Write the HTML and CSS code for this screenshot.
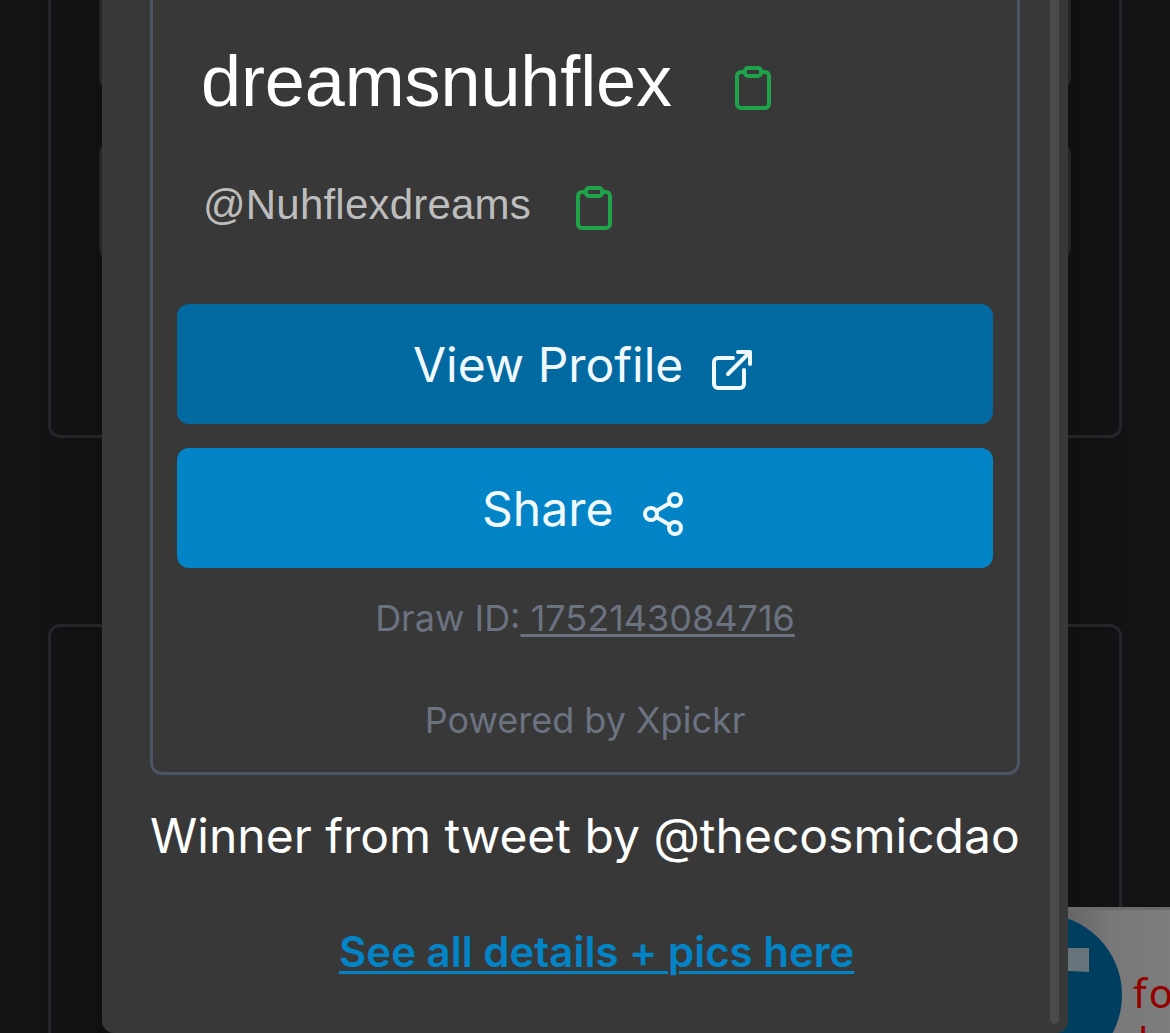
FILE: index.html
```html
<!DOCTYPE html>
<html lang="en">
<head>
<meta charset="utf-8">
<title>Xpickr winner</title>
<link rel="stylesheet" href="styles.css">
</head>
<body>
<div class="page">
  <section class="panel panel-top">
    <div class="field field-first"></div>
    <div class="field"></div>
  </section>
  <section class="panel panel-bottom"></section>
</div>
<aside class="promo">
  <span class="logo"><span class="logo-mark"></span></span>
  <p class="promo-text">fo</p>
  <p class="promo-text promo-next">l</p>
</aside>
<main class="modal">
  <section class="card">
    <div class="row name-row">
      <h1 class="name">dreamsnuhflex</h1>
      <svg class="clip" viewBox="0 0 36 44"><rect x="2" y="6" width="32" height="36" rx="4"/><rect class="clip-tab" x="10" y="2" width="16" height="8" rx="3"/></svg>
    </div>
    <div class="row handle-row">
      <p class="handle">@Nuhflexdreams</p>
      <svg class="clip" viewBox="0 0 36 44"><rect x="2" y="6" width="32" height="36" rx="4"/><rect class="clip-tab" x="10" y="2" width="16" height="8" rx="3"/></svg>
    </div>
    <a class="button view"><span class="view-label">View Profile</span>
      <svg class="icon" viewBox="0 0 24 24"><path d="M12.5 6H5a2 2 0 0 0-2 2v11a2 2 0 0 0 2 2h11a2 2 0 0 0 2-2v-7M15 3h6v6M10 14 21 3"/></svg>
    </a>
    <a class="button share"><span class="share-label">Share</span>
      <svg class="icon" viewBox="0 0 24 24"><circle cx="18" cy="5" r="3"/><circle cx="6" cy="12" r="3"/><circle cx="18" cy="19" r="3"/><path d="m8.59 13.51 6.83 3.98M15.41 6.51l-6.82 3.98"/></svg>
    </a>
    <p class="draw">Draw ID:<u> 1752143084716</u></p>
    <p class="powered">Powered by Xpickr</p>
  </section>
  <p class="winner">Winner from tweet by @thecosmicdao</p>
  <a class="details">See all details + pics here</a>
  <div class="scrollbar"></div>
</main>
</body>
</html>
```
FILE: styles.css
```css
* { box-sizing: border-box; }
body { margin: 0; width: 1170px; height: 1033px; overflow: hidden; position: relative; background: linear-gradient(90deg, #141416, #121214 60px, #101010 102px, #101010 1068px, #121214 1110px, #141416); font-family: Inter, "Liberation Sans", sans-serif; }
h1, p { margin: 0; font-weight: 400; white-space: nowrap; }
.page { height: 1033px; padding: 0 48px; overflow: hidden; }
.panel { border: 3px solid #252529; }
.panel-top { height: 438px; border-top: 0; border-radius: 0 0 12px 12px; padding: 0 48px; }
.panel-bottom { height: 450px; margin-top: 186px; border-radius: 12px; }
.field { height: 118px; border: 3px solid #252525; border-radius: 12px; background: #202020; }
.field-first { height: 90px; margin-bottom: 52px; border-top: 0; border-radius: 0 0 12px 12px; }
.promo { position: absolute; left: 960px; top: 907px; width: 210px; height: 126px; overflow: hidden; border-top: 3px solid #6a6a6a; background: linear-gradient(90deg, #656565 108px, #787878 150px, #7d7d7d); }
.logo { position: absolute; left: 0; top: 4px; width: 162px; height: 162px; border-radius: 50%; background: #003e60; }
.logo-mark { position: absolute; right: 33px; top: 34px; width: 50px; height: 24px; background: #68747b; clip-path: polygon(0 0, 100% 0, 100% 100%, 0 90%); }
.promo-text { padding: 60px 0 0 173px; font: 40px/46px "Noto Sans", sans-serif; letter-spacing: 2px; color: #940000; }
.promo-next { padding: 2px 0 0 178px; }
.modal { position: absolute; left: 102px; top: 0; width: 966px; height: 1033px; padding: 0 48px; border-radius: 0 0 12px 12px; background: #383838; display: flex; flex-direction: column; }
.card { height: 775px; border: 3px solid #4b5563; border-top: 0; border-radius: 0 0 12px 12px; padding: 36px 24px 0; display: flex; flex-direction: column; }
.row { display: flex; align-items: flex-start; padding-left: 24px; }
.name-row { height: 114px; }
.handle-row { height: 154px; }
.name, .handle { font-family: "Liberation Sans", Arial, sans-serif; }
.name { width: 470px; font-size: 72px; line-height: 90px; letter-spacing: -0.1px; color: #fff; }
.handle { width: 329px; font-size: 42px; line-height: 60px; padding-left: 2px; margin-top: 25px; letter-spacing: 0.2px; color: #bdbdbd; }
.clip { width: 36px; height: 44px; fill: none; stroke: #1fa34a; stroke-width: 4; }
.clip-tab { fill: #383838; }
.name-row .clip { margin: 30px 0 0 64px; }
.handle-row .clip { margin: 36px 0 0 46px; }
.button { height: 120px; border-radius: 12px; display: flex; align-items: center; color: #f0f9ff; font-size: 48px; white-space: nowrap; }
.view { background: #0369a1; padding-left: 236px; margin-bottom: 24px; }
.share { background: #0284c7; padding-left: 305px; }
.view-label { width: 295px; }
.share-label { width: 157px; }
.icon { width: 48px; height: 48px; margin-top: 12px; fill: none; stroke: currentColor; stroke-width: 2; stroke-linecap: round; stroke-linejoin: round; }
.draw, .powered { font-size: 36px; line-height: 48px; color: #6b7280; text-align: center; }
.draw { margin-top: 26px; }
.draw u { white-space: pre; text-underline-offset: 3px; text-decoration-thickness: 3px; }
.powered { margin-top: 54px; }
.winner { margin-top: 25px; font-size: 48px; line-height: 72px; color: #fff; }
.details { margin: 50px 0 0 189px; font-size: 42px; font-weight: 600; line-height: 60px; color: #0284c7; text-decoration: underline; text-decoration-thickness: 3px; text-underline-offset: 4px; white-space: nowrap; }
.scrollbar { position: absolute; right: 9px; top: 0; width: 9px; height: 1024px; border-radius: 0 0 5px 5px; background: #4b4b4b; }
```
